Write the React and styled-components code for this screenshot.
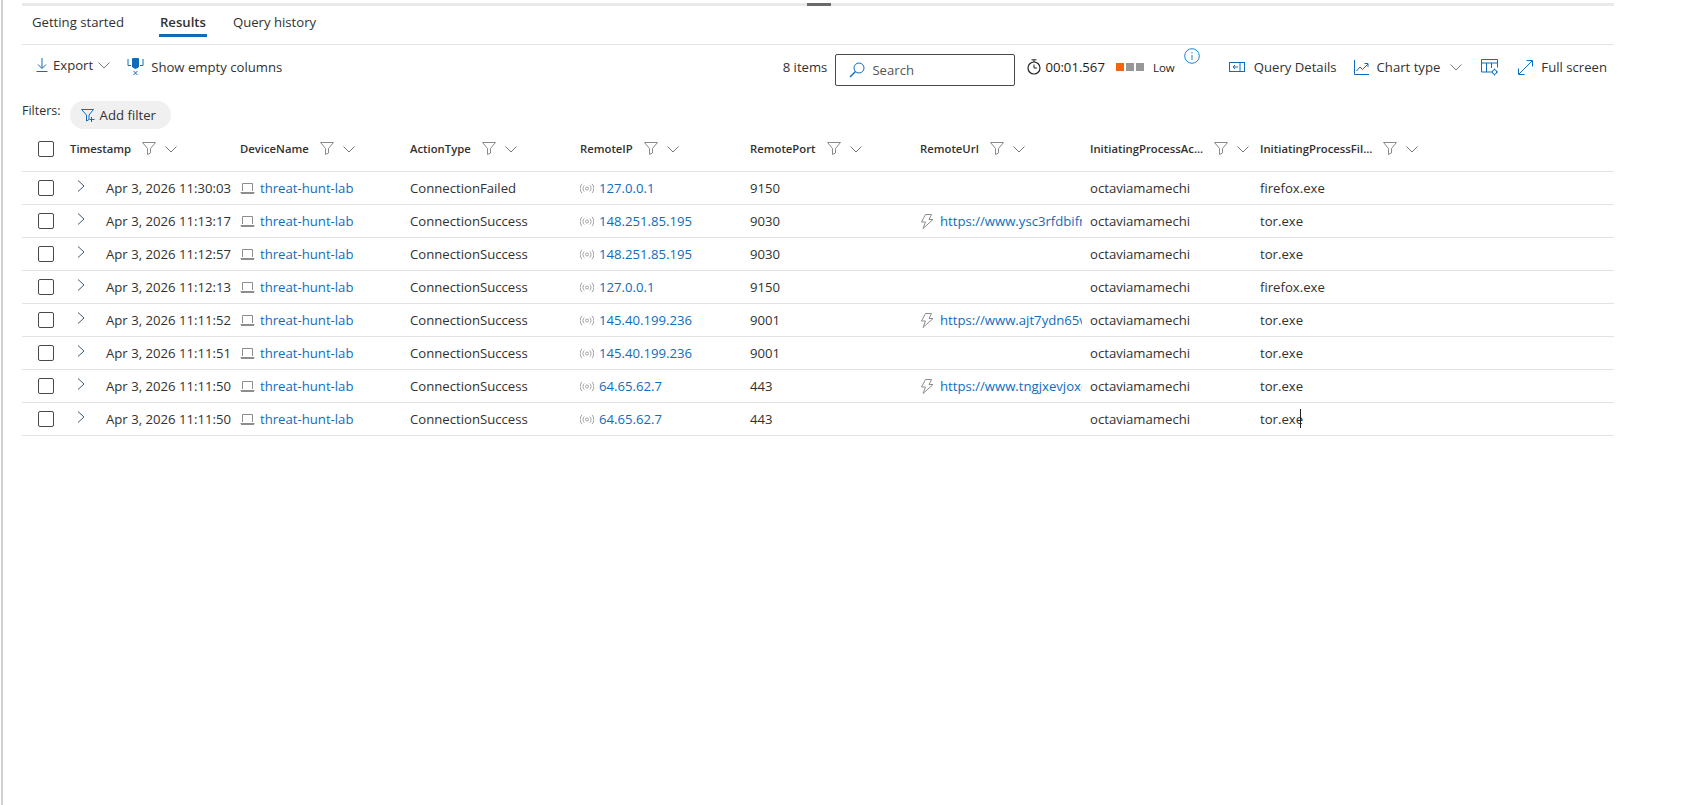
import React from "react";
import styled, { createGlobalStyle } from "styled-components";

const BLUE = "#0f6cbd";
const TEXT = "#323130";

const rows = [
  { time: "Apr 3, 2026 11:30:03", action: "ConnectionFailed", ip: "127.0.0.1", port: "9150", file: "firefox.exe" },
  { time: "Apr 3, 2026 11:13:17", action: "ConnectionSuccess", ip: "148.251.85.195", port: "9030", url: "https://www.ysc3rfdbifr4kw.com", file: "tor.exe" },
  { time: "Apr 3, 2026 11:12:57", action: "ConnectionSuccess", ip: "148.251.85.195", port: "9030", file: "tor.exe" },
  { time: "Apr 3, 2026 11:12:13", action: "ConnectionSuccess", ip: "127.0.0.1", port: "9150", file: "firefox.exe" },
  { time: "Apr 3, 2026 11:11:52", action: "ConnectionSuccess", ip: "145.40.199.236", port: "9001", url: "https://www.ajt7ydn65vrk2.com", file: "tor.exe" },
  { time: "Apr 3, 2026 11:11:51", action: "ConnectionSuccess", ip: "145.40.199.236", port: "9001", file: "tor.exe" },
  { time: "Apr 3, 2026 11:11:50", action: "ConnectionSuccess", ip: "64.65.62.7", port: "443", url: "https://www.tngjxevjoxe5m.com", file: "tor.exe" },
  { time: "Apr 3, 2026 11:11:50", action: "ConnectionSuccess", ip: "64.65.62.7", port: "443", file: "tor.exe", caret: true },
];

const columns = ["Timestamp", "DeviceName", "ActionType", "RemoteIP", "RemotePort", "RemoteUrl", "InitiatingProcessAc...", "InitiatingProcessFil..."];

const GlobalStyle = createGlobalStyle`
  html, body {
    margin: 0;
    padding: 0;
    background: #fff;
  }
  body {
    font-family: "Open Sans", "Noto Sans", sans-serif;
    font-size: 13.15px;
    color: ${TEXT};
  }
`;

const Page = styled.div`
  height: 805px;
  overflow: hidden;
  margin-left: 1px;
  border-left: 2px solid #d2d2d2;
  padding: 3px 0 0 19px;
  box-sizing: border-box;
`;

const Pane = styled.div`
  width: 1592px;
`;

const Splitter = styled.div`
  height: 3px;
  background: #e9e9e9;
  display: flex;
  justify-content: center;
  padding-left: 2px;
  &::after {
    content: "";
    width: 24px;
    background: #6a6a6a;
  }
`;

const Tabs = styled.div`
  display: flex;
  height: 38px;
  padding-left: 10px;
  border-bottom: 1px solid #e4e4e4;
`;

const Tab = styled.div`
  position: relative;
  height: 31px;
  line-height: 32px;
  margin-right: ${(p) => p.$mr ?? 0}px;
  font-weight: ${(p) => (p.$active ? 600 : 400)};
  &::after {
    content: "";
    display: ${(p) => (p.$active ? "block" : "none")};
    position: absolute;
    left: -1px;
    right: -1px;
    bottom: 0;
    height: 3px;
    background: ${BLUE};
  }
`;

const Toolbar = styled.div`
  display: flex;
  justify-content: space-between;
  align-items: center;
  height: 44px;
  padding: 0 7px 0 14px;
`;

const ToolGroup = styled.div`
  display: flex;
  align-items: center;
`;

const ToolButton = styled.div`
  display: flex;
  align-items: center;
  gap: ${(p) => p.$gap ?? 5}px;
  margin-left: ${(p) => p.$ml ?? 0}px;
  margin-top: ${(p) => p.$mt ?? 0}px;
  white-space: nowrap;
`;

const ChevronGap = styled.span`
  display: flex;
  margin-left: ${(p) => p.$ml}px;
`;

const ItemCount = styled.span`
  white-space: nowrap;
`;

const SearchBox = styled.div`
  display: flex;
  align-items: center;
  gap: 7px;
  width: 180px;
  height: 32px;
  margin-left: 8px;
  margin-top: 6px;
  padding-left: 13px;
  box-sizing: border-box;
  border: 1px solid #4a4a4a;
  border-radius: 2px;
  color: #555;
`;

const Timer = styled.div`
  display: flex;
  align-items: center;
  gap: 4px;
  margin-left: 12px;
  color: #1b1b1b;
`;

const Complexity = styled.div`
  display: flex;
  gap: 2px;
  margin-left: 11px;
`;

const Square = styled.span`
  width: 8px;
  height: 8px;
  background: ${(p) => (p.$on ? "#f7630c" : "#979797")};
`;

const LowLabel = styled.span`
  margin-left: 9px;
  font-size: 11.5px;
  color: #1b1b1b;
`;

const InfoWrap = styled.span`
  display: flex;
  margin: -23px 0 0 9px;
`;

const FilterRow = styled.div`
  display: flex;
  align-items: flex-start;
  height: 30px;
  padding-top: 12px;
`;

const FilterLabel = styled.span`
  font-size: 12.5px;
  line-height: 18px;
  margin: 1px 9px 0 0;
`;

const FilterPill = styled.div`
  display: flex;
  align-items: center;
  gap: 5px;
  height: 28px;
  width: 101px;
  padding-left: 11px;
  box-sizing: border-box;
  border-radius: 14px;
  background: #f0f0f0;
`;

const Grid = styled.div`
  display: grid;
  grid-template-columns: 48px repeat(8, 170px);
  height: ${(p) => (p.$header ? 41 : 33)}px;
  box-sizing: border-box;
  border-bottom: 1px solid #e2e2e2;
  align-items: center;
  padding-bottom: ${(p) => (p.$header ? 5 : 0)}px;
`;

const CheckCell = styled.div`
  display: flex;
  padding-left: 16px;
`;

const Checkbox = styled.span`
  width: 16px;
  height: 16px;
  box-sizing: border-box;
  border: 1px solid #4a4a4a;
  border-radius: 2px;
`;

const HeaderCell = styled.div`
  display: flex;
  align-items: center;
  font-size: 11.3px;
  font-weight: 600;
  white-space: nowrap;
`;

const HeaderName = styled.span`
  margin-right: 11px;
`;

const HeaderChevron = styled.span`
  display: flex;
  margin-left: 9px;
`;

const Cell = styled.div`
  position: relative;
  align-self: stretch;
  display: flex;
  align-items: center;
  gap: ${(p) => p.$gap ?? 5}px;
  white-space: nowrap;
  overflow: hidden;
  padding-right: ${(p) => p.$pr ?? 0}px;
`;

const Expander = styled.span`
  display: flex;
  margin: -5px 21px 0 7px;
`;

const LinkText = styled.span`
  color: ${BLUE};
  overflow: hidden;
`;

const Caret = styled.span`
  position: absolute;
  left: 40px;
  top: 6px;
  width: 1px;
  height: 19px;
  background: #222;
`;

const Glyph = styled.svg`
  display: block;
  flex: none;
  fill: none;
  stroke: ${(p) => p.$color ?? BLUE};
  stroke-width: 1;
`;

const Chevron = ({ size = 12, color = "#777" }) => (
  <Glyph $color={color} width={size} height={size} viewBox="0 0 12 12">
    <path d="M0.5 3.5 6 9 11.5 3.5" />
  </Glyph>
);

const ChevronRight = () => (
  <Glyph $color="#3c5a78" width="8" height="12" viewBox="0 0 8 12">
    <path d="M1 .5 7 6 1 11.5" />
  </Glyph>
);

const Funnel = ({ color = "#8a8a8a" }) => (
  <Glyph $color={color} width="14" height="13" viewBox="0 0 14 13">
    <path d="M.5.5h13L8.5 6.500v4.500l-3 1.500v-6z" />
  </Glyph>
);

const ExportIcon = () => (
  <Glyph width="12" height="16" viewBox="0 0 12 16">
    <path d="M6 1v10M2 7.500 6 11.500 10 7.500M.5 14.500h11" />
  </Glyph>
);

const EmptyColumnsIcon = () => (
  <Glyph width="17" height="18" viewBox="0 0 17 18">
    <path d="M1 1v6.500h3M16 1v6.500h-3" />
    <path d="M5.500 .5h6v8.500l-3 1.500-3-1.500z" fill={BLUE} />
    <path d="M6.500 13 10.500 17M10.500 13 6.500 17" />
  </Glyph>
);

const AddFilterIcon = () => (
  <Glyph width="14" height="14" viewBox="0 0 14 14">
    <path d="M.5 1.500h12L8 7v4.500L5.500 13V7z" />
    <path d="M10.500 9v5M8.500 11.500h5" />
  </Glyph>
);

const SearchIcon = () => (
  <Glyph width="16" height="16" viewBox="0 0 16 16">
    <circle cx="10" cy="6" r="5" />
    <path d="M6.500 9.500 1 15" strokeWidth="1.400" />
  </Glyph>
);

const TimerIcon = () => (
  <Glyph $color="#222" width="14" height="16" viewBox="0 0 14 16">
    <circle cx="7" cy="9" r="6" strokeWidth="1.200" />
    <path d="M4.500.8h5M7 1v2M7 5.500V9h3" />
  </Glyph>
);

const InfoIcon = () => (
  <Glyph $color="#1a86d8" width="16" height="16" viewBox="0 0 16 16">
    <circle cx="8" cy="8" r="7.300" />
    <path d="M8 7v5M8 4v1.500" />
  </Glyph>
);

const QueryIcon = () => (
  <Glyph width="16" height="10" viewBox="0 0 16 10">
    <rect x=".5" y=".5" width="15" height="9" />
    <path d="M11 .5v9M9 5H4M6 3 4 5 6 7" />
  </Glyph>
);

const ChartIcon = () => (
  <Glyph width="15" height="15" viewBox="0 0 15 15">
    <path d="M.5 0v14.500H15" />
    <path d="M2.500 11 6 7l2.500 2.500L14 4M10.500 3.500H14V7" />
  </Glyph>
);

const TableGearIcon = () => (
  <Glyph width="18" height="17" viewBox="0 0 18 17">
    <path d="M10 13H.5V.5h16v8M.5 4h16M5.500 4v9M10.500 4v5" />
    <circle cx="13.500" cy="13" r="2.200" />
    <path d="M13.500 9.500v1.300M13.500 15.200v1.300M10 13h1.300M15.700 13H17" />
  </Glyph>
);

const FullScreenIcon = () => (
  <Glyph width="15" height="15" viewBox="0 0 15 15">
    <path d="M1 14 14 1M8.500.5h6V6.500M.5 8.500v6h6" />
  </Glyph>
);

const LaptopIcon = () => (
  <Glyph $color="#8d8d8d" width="15" height="12" viewBox="0 0 15 12">
    <path d="M2.500 9V1.500h10V9M.5 10.500h14" />
    <path d="M1 11.500h13" />
  </Glyph>
);

const SignalIcon = () => (
  <Glyph $color="#a3a3a3" width="14" height="11" viewBox="0 0 14 11">
    <circle cx="7" cy="5.500" r="1.500" />
    <path d="M4.300 2.500a4 4 0 0 0 0 6M9.700 2.500a4 4 0 0 1 0 6M2 .8a7 7 0 0 0 0 9.400M12 .8a7 7 0 0 1 0 9.400" />
  </Glyph>
);

const BoltIcon = () => (
  <Glyph $color="#8d8d8d" width="14" height="15" viewBox="0 0 14 15">
    <path d="M5.500.5h6L9 5.500h4L3 14.500 5.500 8H1.500z" />
  </Glyph>
);

const App = () => (
  <>
    <GlobalStyle />
    <Page>
      <Pane>
        <Splitter />
        <Tabs>
          <Tab $mr={36}>Getting started</Tab>
          <Tab $active $mr={27}>Results</Tab>
          <Tab>Query history</Tab>
        </Tabs>
        <Toolbar>
          <ToolGroup>
            <ToolButton $mt={-5}>
              <ExportIcon />
              Export
              <Chevron />
            </ToolButton>
            <ToolButton $ml={17} $gap={7}>
              <EmptyColumnsIcon />
              Show empty columns
            </ToolButton>
          </ToolGroup>
          <ToolGroup>
            <ItemCount>8 items</ItemCount>
            <SearchBox>
              <SearchIcon />
              Search
            </SearchBox>
            <Timer>
              <TimerIcon />
              00:01.567
            </Timer>
            <Complexity>
              <Square $on />
              <Square />
              <Square />
            </Complexity>
            <LowLabel>Low</LowLabel>
            <InfoWrap>
              <InfoIcon />
            </InfoWrap>
            <ToolButton $ml={29} $gap={9}>
              <QueryIcon />
              Query Details
            </ToolButton>
            <ToolButton $ml={17} $gap={8}>
              <ChartIcon />
              Chart type
              <ChevronGap $ml={2}>
                <Chevron />
              </ChevronGap>
            </ToolButton>
            <ToolButton $ml={19}>
              <TableGearIcon />
            </ToolButton>
            <ToolButton $ml={19} $gap={8}>
              <FullScreenIcon />
              Full screen
            </ToolButton>
          </ToolGroup>
        </Toolbar>
        <FilterRow>
          <FilterLabel>Filters:</FilterLabel>
          <FilterPill>
            <AddFilterIcon />
            Add filter
          </FilterPill>
        </FilterRow>
        <Grid $header>
          <CheckCell>
            <Checkbox />
          </CheckCell>
          {columns.map((name) => (
            <HeaderCell key={name}>
              <HeaderName>{name}</HeaderName>
              <Funnel />
              <HeaderChevron>
                <Chevron />
              </HeaderChevron>
            </HeaderCell>
          ))}
        </Grid>
        {rows.map((row, i) => (
          <Grid key={i}>
            <CheckCell>
              <Checkbox />
            </CheckCell>
            <Cell $gap={0}>
              <Expander>
                <ChevronRight />
              </Expander>
              {row.time}
            </Cell>
            <Cell>
              <LaptopIcon />
              <LinkText>threat-hunt-lab</LinkText>
            </Cell>
            <Cell>{row.action}</Cell>
            <Cell>
              <SignalIcon />
              <LinkText>{row.ip}</LinkText>
            </Cell>
            <Cell>{row.port}</Cell>
            <Cell $gap={6} $pr={8}>
              {row.url && <BoltIcon />}
              {row.url && <LinkText>{row.url}</LinkText>}
            </Cell>
            <Cell>octaviamamechi</Cell>
            <Cell>
              {row.file}
              {row.caret && <Caret />}
            </Cell>
          </Grid>
        ))}
      </Pane>
    </Page>
  </>
);

export default App;
